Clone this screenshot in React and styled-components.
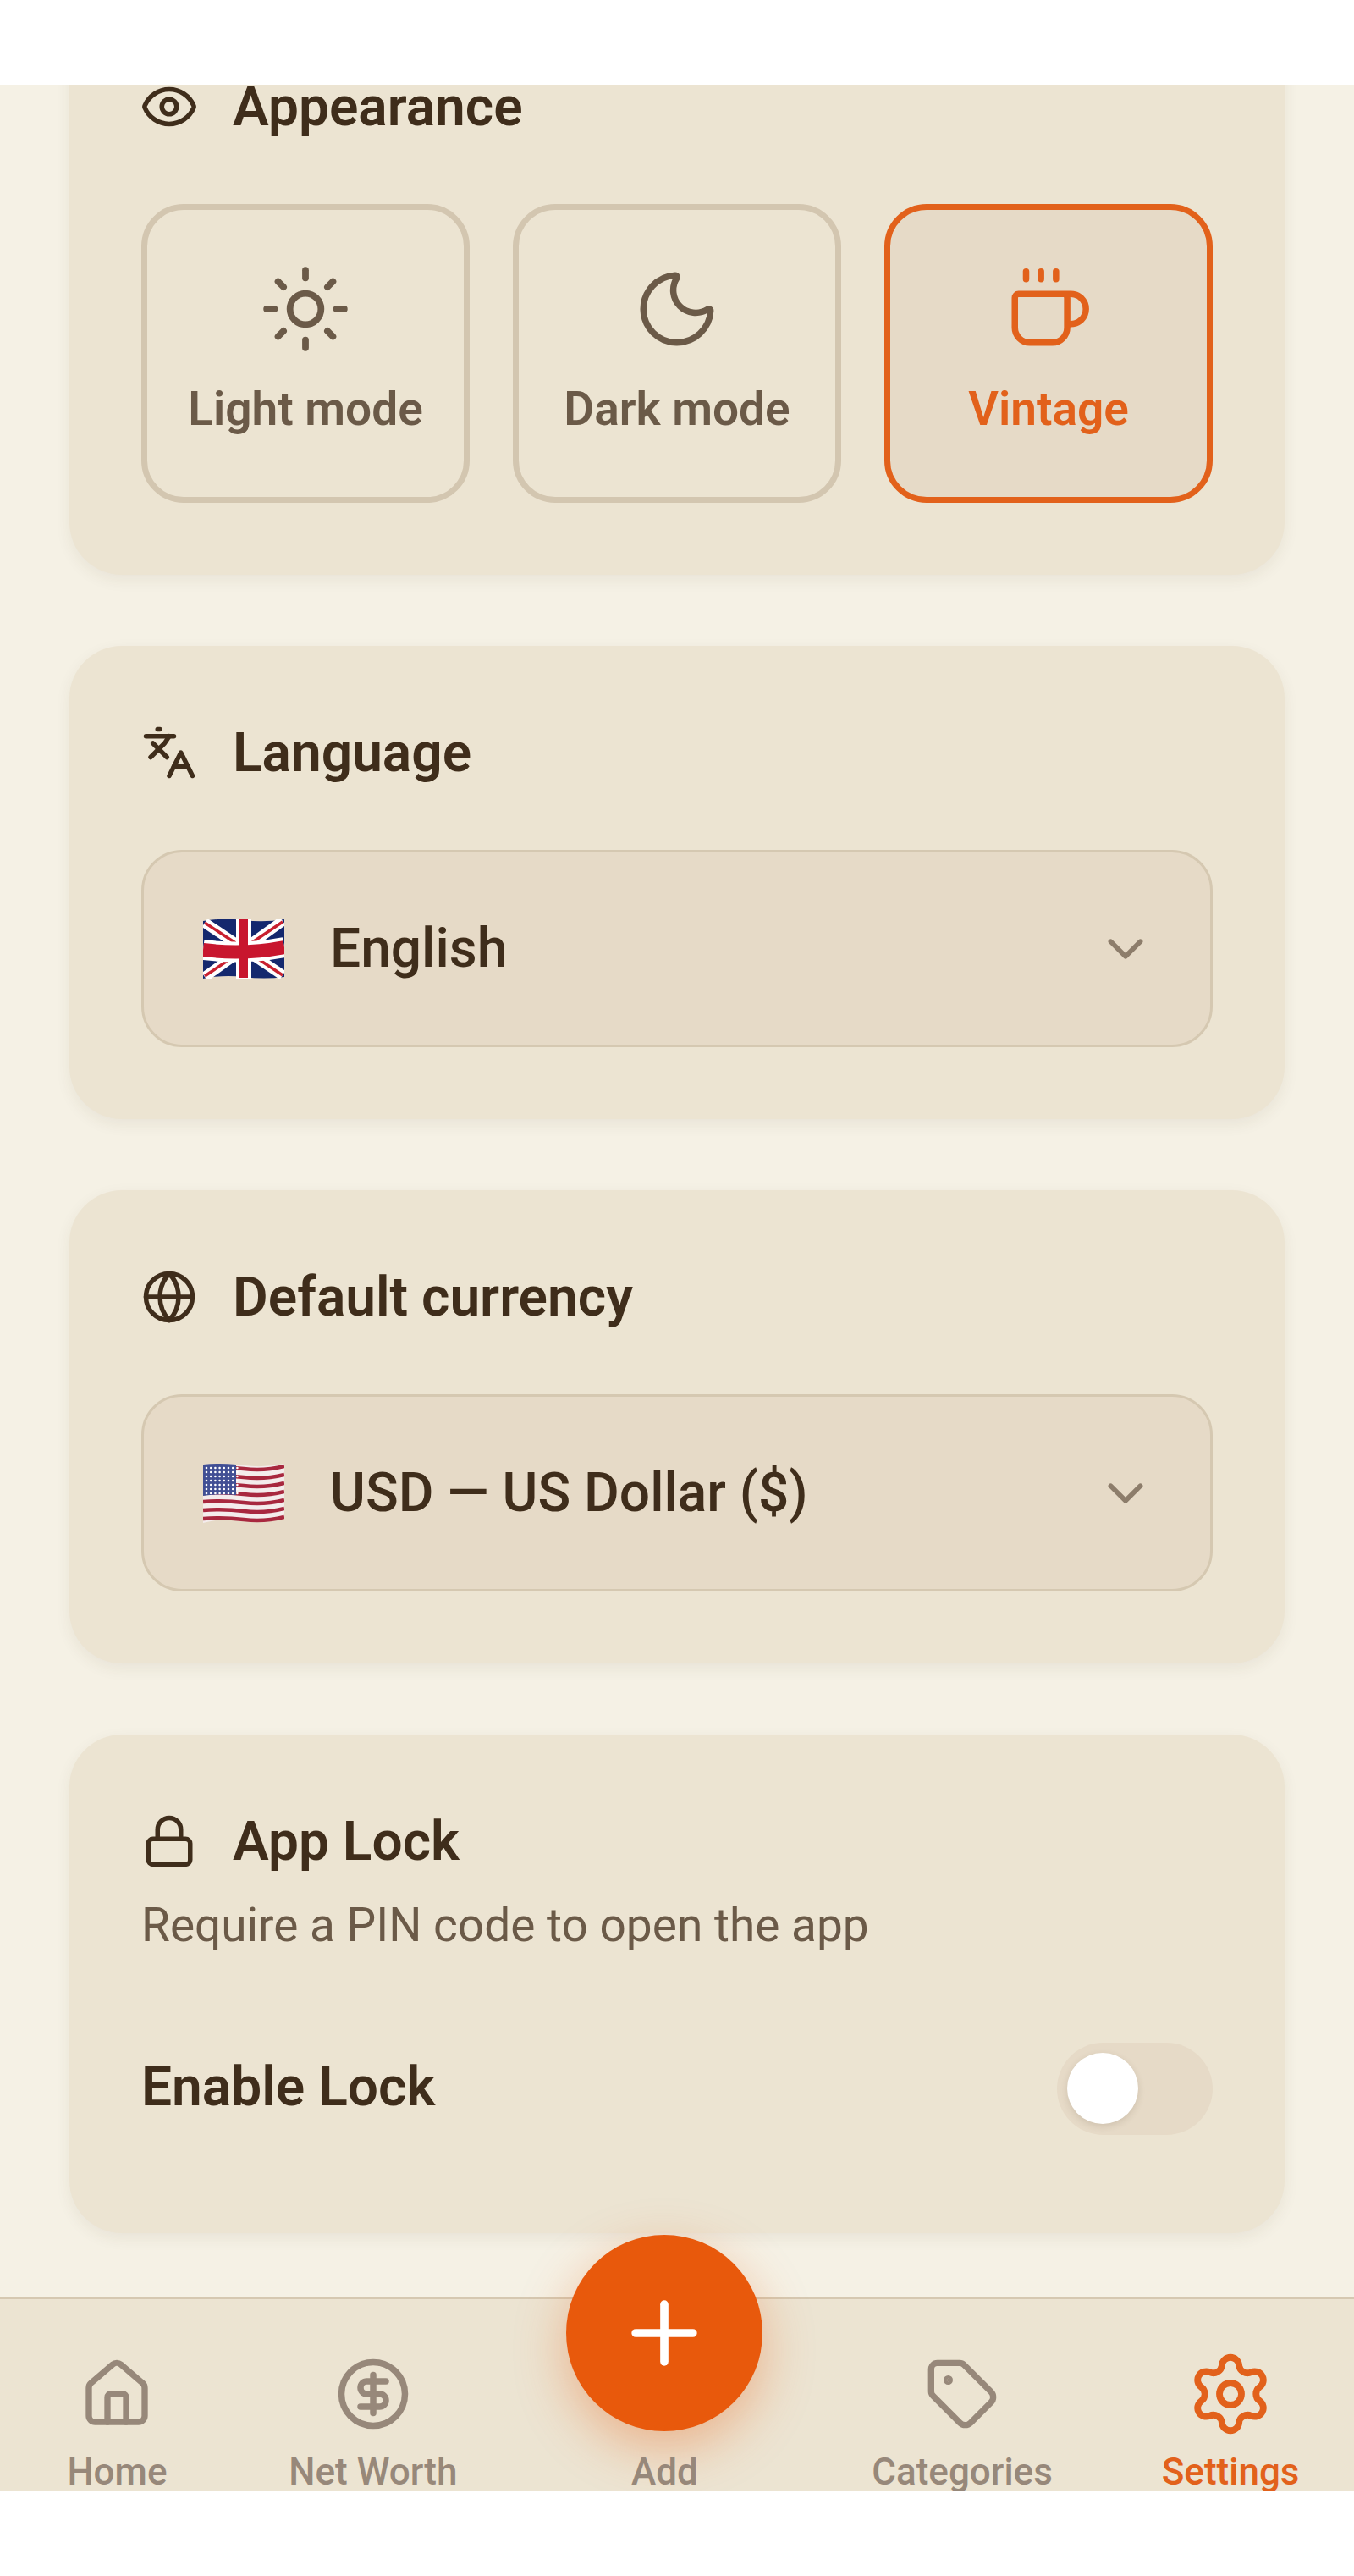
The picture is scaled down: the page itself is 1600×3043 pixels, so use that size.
import styled, { createGlobalStyle } from "styled-components";
import {
  ChevronDown,
  CircleDollarSign,
  Coffee,
  Eye,
  Globe,
  House,
  Languages,
  Lock,
  Moon,
  Plus,
  Settings,
  Sun,
  Tag,
} from "lucide-react";

const themes = [
  { label: "Light mode", Icon: Sun, size: 110 },
  { label: "Dark mode", Icon: Moon, size: 106 },
  { label: "Vintage", Icon: Coffee, size: 106, active: true },
];

function UkFlag() {
  return (
    <FlagSvg viewBox="0 0 96 70">
      <path
        d="M0 2 Q24 -2 48 1 T96 0 V68 Q72 71 48 68 T0 70 Z"
        fill="#14286e"
      />
      <path d="M2 4 L94 66 M94 2 L2 68" stroke="#fff" strokeWidth="12" />
      <path d="M2 4 L46 33 M94 66 L52 38 M94 3 L54 30 M2 67 L42 40" stroke="#c8202f" strokeWidth="3.5" />
      <path d="M0 36 Q48 42 96 33" stroke="#fff" strokeWidth="24" fill="none" />
      <path d="M48 0 V70" stroke="#fff" strokeWidth="18" />
      <path d="M0 36 Q48 42 96 33" stroke="#c8162e" strokeWidth="16" fill="none" />
      <path d="M48 0 V69" stroke="#c8162e" strokeWidth="10" />
    </FlagSvg>
  );
}

function UsFlag() {
  const stripes = [3, 13, 23, 33, 43, 53, 63];
  const stars = [];
  for (let row = 0; row < 7; row++) {
    for (let col = 0; col < 8; col++) {
      stars.push(<circle key={row + "-" + col} cx={4 + col * 5.2} cy={5 + row * 5} r="1.3" fill="#fff" />);
    }
  }
  return (
    <FlagSvg viewBox="0 0 96 70">
      <path d="M0 1 Q24 -1 48 2 T96 0 V62 Q72 66 48 65 T0 70 Z" fill="#f4ecec" />
      {stripes.map((y) => (
        <path
          key={y}
          d={`M0 ${y + 2} Q24 ${y} 48 ${y + 3} T96 ${y}`}
          stroke="#a8283f"
          strokeWidth="4.6"
          fill="none"
        />
      ))}
      <path d="M0 1 Q20 -1 39 1 V37 Q20 35 0 38 Z" fill="#414f94" />
      {stars}
    </FlagSvg>
  );
}

export default function App() {
  return (
    <>
      <GlobalStyle />
      <Page>
        <Scroller>
          <Content>
            <Card>
              <CardHeading>
                <WideIcon>
                  <Eye size={70} strokeWidth={1.9} />
                </WideIcon>
                <CardTitle>Appearance</CardTitle>
              </CardHeading>
              <ThemeGrid>
                {themes.map(({ label, Icon, size, active }) => (
                  <ThemeOption key={label} $active={active}>
                    <ThemeIcon>
                      <Icon size={size} strokeWidth={1.7} />
                    </ThemeIcon>
                    <ThemeLabel>{label}</ThemeLabel>
                  </ThemeOption>
                ))}
              </ThemeGrid>
            </Card>

            <Card>
              <CardHeading>
                <Languages size={66} strokeWidth={2} />
                <CardTitle>Language</CardTitle>
              </CardHeading>
              <SelectBox>
                <UkFlag />
                <SelectText>English</SelectText>
                <ChevronDown size={70} strokeWidth={2} color="#8d7d6b" />
              </SelectBox>
            </Card>

            <Card>
              <CardHeading>
                <Globe size={66} strokeWidth={2} />
                <CardTitle>Default currency</CardTitle>
              </CardHeading>
              <SelectBox>
                <UsFlag />
                <SelectText>USD — US Dollar ($)</SelectText>
                <ChevronDown size={70} strokeWidth={2} color="#8d7d6b" />
              </SelectBox>
            </Card>

            <Card>
              <CardHeading>
                <Lock size={66} strokeWidth={2} />
                <CardTitle>App Lock</CardTitle>
              </CardHeading>
              <Description>Require a PIN code to open the app</Description>
              <ToggleRow>
                <ToggleLabel>Enable Lock</ToggleLabel>
                <Toggle>
                  <Knob />
                </Toggle>
              </ToggleRow>
            </Card>
          </Content>
        </Scroller>

        <BottomNav>
          <NavItem>
            <NavIcon>
              <House size={88} strokeWidth={2} />
            </NavIcon>
            <NavLabel>Home</NavLabel>
          </NavItem>
          <NavItem>
            <NavIcon>
              <CircleDollarSign size={90} strokeWidth={2} />
            </NavIcon>
            <NavLabel>Net Worth</NavLabel>
          </NavItem>
          <NavItem>
            <AddButton>
              <Plus size={116} strokeWidth={2} color="#fff" />
            </AddButton>
            <NavLabel>Add</NavLabel>
          </NavItem>
          <NavItem>
            <NavIcon>
              <Tag size={88} strokeWidth={2} />
            </NavIcon>
            <NavLabel>Categories</NavLabel>
          </NavItem>
          <NavItem $active>
            <NavIcon>
              <Settings size={104} strokeWidth={1.8} />
            </NavIcon>
            <NavLabel>Settings</NavLabel>
          </NavItem>
        </BottomNav>
      </Page>
    </>
  );
}

const GlobalStyle = createGlobalStyle`
  html, body {
    margin: 0;
    padding: 0;
    background: #fff;
  }
  body {
    padding-top: 100px;
    font-family: "Roboto", "Liberation Sans", sans-serif;
    color: #3f2d1b;
  }
`;

const Page = styled.div`
  width: 1600px;
  height: 2843px;
  display: flex;
  flex-direction: column;
  overflow: hidden;
  background: #f5f1e5;
`;

const Scroller = styled.main`
  flex: 1;
  min-height: 0;
  overflow: hidden;
`;

const Content = styled.div`
  margin-top: -100px;
  padding: 0 82px;
  display: flex;
  flex-direction: column;
  gap: 84px;
`;

const Card = styled.section`
  padding: 87px 85px 85px;
  background: #ece4d2;
  border-radius: 62px;
  box-shadow: 0 6px 18px rgba(70, 50, 30, 0.07);
`;

const CardHeading = styled.div`
  height: 78px;
  display: flex;
  align-items: center;
  gap: 42px;
  color: #3f2d1b;
`;

const WideIcon = styled.span`
  display: flex;
  margin: 0 -2px;
`;

const CardTitle = styled.h2`
  margin: 2px 0 0;
  font-size: 64px;
  font-weight: 600;
  line-height: 78px;
`;

const ThemeGrid = styled.div`
  margin-top: 76px;
  display: grid;
  grid-template-columns: repeat(3, 1fr);
  gap: 51px;
`;

const ThemeOption = styled.div`
  box-sizing: border-box;
  height: 353px;
  padding-top: 62px;
  display: flex;
  flex-direction: column;
  align-items: center;
  gap: 30px;
  border: 7px solid ${(p) => (p.$active ? "#e2611b" : "#d3c6b0")};
  border-radius: 50px;
  background: ${(p) => (p.$active ? "#e6dac7" : "transparent")};
  color: ${(p) => (p.$active ? "#e2611b" : "#6b5a48")};
`;

const ThemeIcon = styled.span`
  height: 110px;
  display: flex;
  align-items: center;
`;

const ThemeLabel = styled.span`
  font-size: 55px;
  font-weight: 600;
  line-height: 66px;
`;

const SelectBox = styled.div`
  box-sizing: border-box;
  height: 233px;
  margin-top: 76px;
  padding: 0 65px 0 70px;
  display: flex;
  align-items: center;
  gap: 54px;
  background: #e6dac7;
  border: 3px solid #d5c8b1;
  border-radius: 48px;
`;

const FlagSvg = styled.svg`
  width: 96px;
  height: 70px;
  flex-shrink: 0;
`;

const SelectText = styled.span`
  flex: 1;
  font-size: 64px;
  font-weight: 500;
  color: #3f2d1b;
`;

const Description = styled.p`
  margin: 20px 0 0;
  font-size: 55px;
  line-height: 80px;
  color: #6b5a48;
`;

const ToggleRow = styled.div`
  margin: 99px 0 31px;
  height: 109px;
  display: flex;
  align-items: center;
  justify-content: space-between;
`;

const ToggleLabel = styled.span`
  margin-bottom: 5px;
  font-size: 64px;
  font-weight: 600;
`;

const Toggle = styled.div`
  box-sizing: border-box;
  width: 184px;
  height: 109px;
  padding: 12px;
  border-radius: 55px;
  background: #e6dac7;
`;

const Knob = styled.div`
  width: 84px;
  height: 84px;
  border-radius: 50%;
  background: #fff;
  box-shadow: 0 3px 8px rgba(70, 50, 30, 0.14);
`;

const BottomNav = styled.nav`
  box-sizing: border-box;
  position: relative;
  z-index: 1;
  height: 230px;
  flex-shrink: 0;
  padding-top: 62px;
  display: flex;
  justify-content: space-around;
  align-items: flex-start;
  background: #ece4d2;
  border-top: 3px solid #d5c8b1;
`;

const NavItem = styled.div`
  min-width: 148px;
  display: flex;
  flex-direction: column;
  align-items: center;
  color: ${(p) => (p.$active ? "#e2611b" : "#97887a")};
`;

const NavIcon = styled.span`
  height: 100px;
  display: flex;
  align-items: center;
`;

const NavLabel = styled.span`
  margin-top: 12px;
  font-size: 44px;
  font-weight: 500;
  line-height: 60px;
  white-space: nowrap;
`;

const AddButton = styled.div`
  width: 232px;
  height: 232px;
  margin: -138px 0 6px;
  display: flex;
  align-items: center;
  justify-content: center;
  border-radius: 50%;
  background: #e8590c;
  box-shadow: 0 20px 60px rgba(232, 89, 12, 0.35);
`;
